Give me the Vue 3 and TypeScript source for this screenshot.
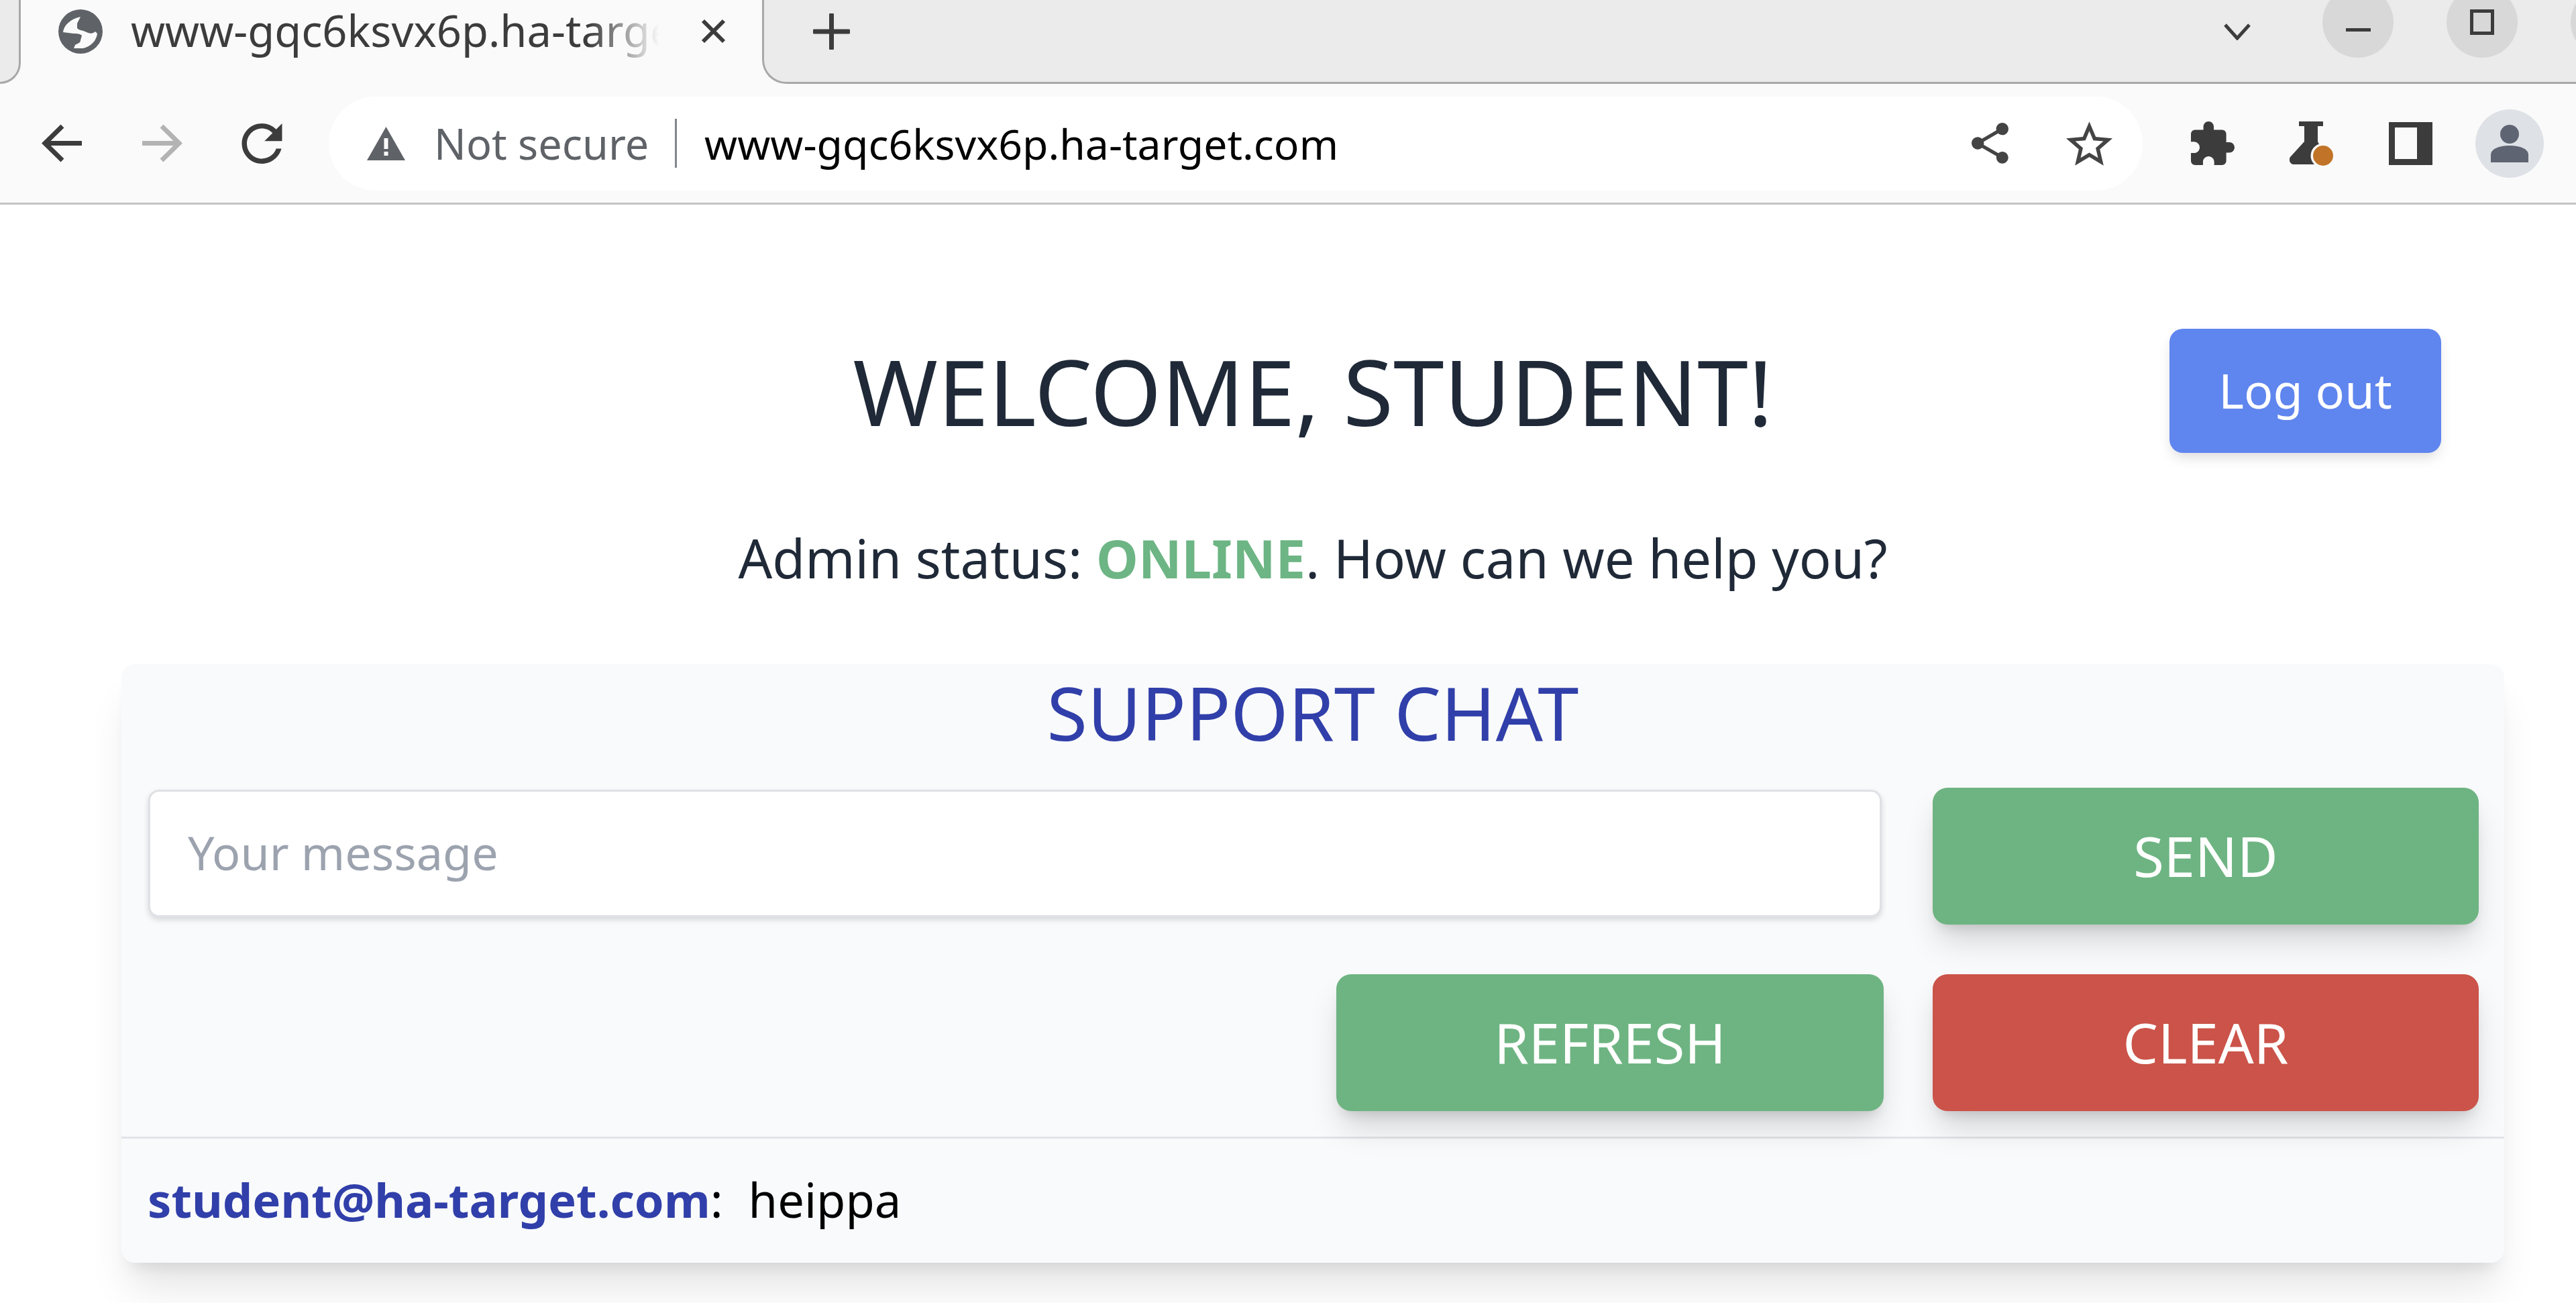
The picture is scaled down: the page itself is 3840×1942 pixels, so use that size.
<script setup lang="ts">
import { ref } from 'vue'

interface ChatMessage {
  sender: string
  text: string
}

const messages = ref<ChatMessage[]>([{ sender: 'student@ha-target.com', text: 'heippa' }])
const draft = ref('')
const url = 'www-gqc6ksvx6p.ha-target.com'
</script>

<template>
  <div class="page">
    <header class="chrome">
      <div class="tabstrip">
        <div class="stub"></div>
        <div class="tab">
          <svg class="favicon" viewBox="0 0 66 66">
            <circle cx="33" cy="33" r="33" fill="#5f6368" />
            <path d="M7 34C8 24 18 14 33 11L28 21V28C32 32 36 31 40 33S50 38 55 33L58 36C57 45 50 55 37 58L23 58 25 53C30 50 33 50 33 46L35 39C32 36 28 36 23 36z" fill="#fafafa" />
          </svg>
          <span class="tab-title">{{ url }}</span>
          <svg class="tab-close" viewBox="0 0 37 37">
            <path d="M3 3l31 31M34 3L3 34" stroke="#3c3c3c" stroke-width="6" fill="none" />
          </svg>
        </div>
        <div class="strip-rest">
          <svg class="new-tab" viewBox="0 0 55 54">
            <path d="M27.5 2v50M2 27h51" stroke="#3c3c3c" stroke-width="7" stroke-linecap="round" fill="none" />
          </svg>
          <svg class="tab-search" viewBox="0 0 40 25">
            <path d="M2 2l18 20L38 2" stroke="#3c3c3c" stroke-width="5" fill="none" />
          </svg>
          <div class="win-btn win-min">
            <svg viewBox="0 0 37 5" width="37" height="5"><rect width="37" height="5" fill="#3c3c3c" /></svg>
          </div>
          <div class="win-btn win-max">
            <svg viewBox="0 0 36 38" width="36" height="38">
              <rect x="2.5" y="2.5" width="31" height="33" fill="none" stroke="#3c3c3c" stroke-width="5" />
            </svg>
          </div>
          <div class="win-btn win-close"></div>
        </div>
      </div>

      <div class="toolbar">
        <svg class="ic back" viewBox="0 0 61 57">
          <path d="M60 28.5H6M31 3L5 28.5 31 54" stroke="#3c3c3c" stroke-width="7" fill="none" />
        </svg>
        <svg class="ic forward" viewBox="0 0 61 57">
          <path d="M1 28.5h54M30 3l26 25.5L30 54" stroke="#b3b3b3" stroke-width="7" fill="none" />
        </svg>
        <svg class="ic reload" viewBox="4 4 16 16">
          <path fill="#3c3c3c" d="M17.65 6.35A7.958 7.958 0 0 0 12 4c-4.42 0-7.99 3.58-7.99 8s3.57 8 7.99 8c3.73 0 6.84-2.55 7.73-6h-2.08A5.99 5.99 0 0 1 12 18c-3.31 0-6-2.69-6-6s2.69-6 6-6c1.66 0 3.14.69 4.22 1.78L13 11h7V4l-2.35 2.35z" />
        </svg>

        <div class="omnibox">
          <svg class="warn" viewBox="0 0 57 50">
            <path d="M28.5 0L57 50H0z" fill="#5f6368" />
            <rect x="25.5" y="17" width="6" height="16" fill="#fff" />
            <rect x="25.5" y="37" width="6" height="6" fill="#fff" />
          </svg>
          <span class="not-secure">Not secure</span>
          <span class="sep"></span>
          <span class="omni-url">{{ url }}</span>
          <svg class="ic share" viewBox="3 2 18 20">
            <path fill="#444" d="M18 16.08c-.76 0-1.44.3-1.96.77L8.91 12.7c.05-.23.09-.46.09-.7s-.04-.47-.09-.7l7.05-4.11c.54.5 1.25.81 2.04.81 1.66 0 3-1.34 3-3s-1.34-3-3-3-3 1.34-3 3c0 .24.04.47.09.7L8.04 9.81C7.5 9.31 6.79 9 6 9c-1.66 0-3 1.34-3 3s1.34 3 3 3c.79 0 1.5-.31 2.04-.81l7.12 4.16c-.05.21-.08.43-.08.65 0 1.61 1.31 2.92 2.92 2.92s2.92-1.31 2.92-2.92-1.31-2.92-2.92-2.92z" />
          </svg>
          <svg class="ic star" viewBox="2 2 20 19">
            <path fill="#444" d="M22 9.24l-7.19-.62L12 2 9.19 8.63 2 9.24l5.46 4.73L5.82 21 12 17.27 18.18 21l-1.63-7.03L22 9.24zM12 15.4l-3.76 2.27 1-4.28-3.32-2.88 4.38-.38L12 6.1l1.71 4.04 4.38.38-3.32 2.88 1 4.28L12 15.4z" />
          </svg>
        </div>

        <svg class="ic puzzle" viewBox="2 1 21 21">
          <path fill="#3c3c3c" d="M20.5 11H19V7c0-1.1-.9-2-2-2h-4V3.5C13 2.12 11.88 1 10.5 1S8 2.12 8 3.5V5H4c-1.1 0-1.99.9-1.99 2v3.8H3.5c1.49 0 2.7 1.21 2.7 2.7s-1.21 2.7-2.7 2.7H2V20c0 1.1.9 2 2 2h3.8v-1.5c0-1.49 1.21-2.7 2.7-2.7 1.49 0 2.7 1.21 2.7 2.7V22H17c1.1 0 2-.9 2-2v-4h1.5c1.38 0 2.5-1.12 2.5-2.5S21.88 11 20.5 11z" />
        </svg>
        <svg class="ic flask" viewBox="0 0 67 66">
          <path fill="#3c3c3c" d="M14 0h36v7h-8v23l10 20c2 8-2 14-8 14H7c-6 0-9-6-6-11L22 30V7h-8z" />
          <circle cx="50" cy="51" r="18.5" fill="#fafafa" />
          <circle cx="50" cy="51" r="15" fill="#c17427" />
        </svg>
        <svg class="ic side" viewBox="0 0 65 64">
          <path fill-rule="evenodd" fill="#3c3c3c" d="M0 0h65v64H0zM9 8v47h33V8z" />
        </svg>
        <div class="avatar">
          <svg viewBox="0 0 56 56" width="56" height="56">
            <circle cx="28" cy="14" r="14" fill="#5f6473" />
            <path d="M0 56V45c0-9 12-14 28-14s28 5 28 14v11z" fill="#5f6473" />
          </svg>
        </div>
      </div>
    </header>

    <main class="content">
      <div class="welcome-row">
        <span></span>
        <h1 class="welcome">WELCOME, STUDENT!</h1>
        <button class="logout" type="button">Log out</button>
      </div>
      <p class="status">
        Admin status: <strong class="online">ONLINE</strong>. How can we help you?
      </p>

      <section class="card">
        <h2 class="card-title">SUPPORT CHAT</h2>
        <div class="form">
          <input v-model="draft" class="msg-input" type="text" placeholder="Your message" />
          <button class="action green send" type="button">SEND</button>
          <button class="action green refresh" type="button">REFRESH</button>
          <button class="action red clear" type="button">CLEAR</button>
        </div>
        <ul class="messages">
          <li v-for="m in messages" :key="m.sender" class="message">
            <span class="sender">{{ m.sender }}</span><span class="colon">:</span>
            <span class="text">{{ m.text }}</span>
          </li>
        </ul>
      </section>
    </main>
  </div>
</template>

<style>
html,
body {
  margin: 0;
  background: #fff;
  overflow: hidden;
}
</style>

<style scoped>
.page {
  width: 3840px;
  height: 1942px;
  overflow: hidden;
  font-family: "Noto Sans", sans-serif;
  color: #1f2937;
}

.chrome {
  display: flex;
  flex-direction: column;
}

.tabstrip {
  display: flex;
  height: 125px;
  background: #fafafa;
  overflow: hidden;
}

.stub {
  width: 31px;
  flex: none;
  box-sizing: border-box;
  background: #ebebeb;
  border-right: 3px solid #a8a8a8;
  border-bottom: 3px solid #a8a8a8;
  border-bottom-right-radius: 36px;
}

.tab {
  width: 1105px;
  flex: none;
  display: flex;
  align-items: flex-start;
}

.favicon {
  width: 66px;
  height: 66px;
  margin: 14px 0 0 56px;
  flex: none;
}

.tab-title {
  width: 812px;
  flex: none;
  margin: 0 0 0 42px;
  font-size: 65px;
  line-height: 90px;
  white-space: nowrap;
  overflow: hidden;
  color: #3c3c3c;
  -webkit-mask-image: linear-gradient(90deg, #000 84%, transparent 97%);
  mask-image: linear-gradient(90deg, #000 84%, transparent 97%);
}

.tab-close {
  width: 37px;
  height: 37px;
  margin: 28px 0 0 38px;
  flex: none;
}

.strip-rest {
  flex: 1;
  min-width: 0;
  overflow: hidden;
  display: flex;
  align-items: flex-start;
  box-sizing: border-box;
  background: #ebebeb;
  border-left: 3px solid #a8a8a8;
  border-bottom: 3px solid #a8a8a8;
  border-bottom-left-radius: 36px;
}

.new-tab {
  width: 55px;
  height: 54px;
  margin: 20px 0 0 73px;
  flex: none;
}

.tab-search {
  width: 40px;
  height: 25px;
  margin: 35px 0 0 2048px;
  flex: none;
}

.win-btn {
  width: 106px;
  height: 106px;
  margin-top: -20px;
  border-radius: 50%;
  background: #d8d8d8;
  flex: none;
  display: flex;
  align-items: center;
  justify-content: center;
}

.win-min {
  margin-left: 107px;
}

.win-min svg {
  margin-top: 22px;
}

.win-max {
  margin-left: 79px;
}

.win-close {
  margin-left: 79px;
}

.toolbar {
  display: flex;
  align-items: center;
  height: 177px;
  background: #fafafa;
  border-bottom: 3px solid #c4c4c4;
}

.ic {
  display: block;
  flex: none;
}

.back {
  width: 61px;
  height: 57px;
  margin-left: 62px;
}

.forward {
  width: 61px;
  height: 57px;
  margin-left: 88px;
}

.reload {
  width: 61px;
  height: 60px;
  margin-left: 88px;
}

.omnibox {
  width: 2704px;
  height: 140px;
  margin-left: 69px;
  flex: none;
  box-sizing: border-box;
  display: flex;
  align-items: center;
  background: #fff;
  border-radius: 70px;
}

.warn {
  width: 57px;
  height: 50px;
  margin-left: 57px;
  flex: none;
}

.not-secure {
  width: 319px;
  margin-left: 43px;
  font-size: 63px;
  white-space: nowrap;
  color: #5f6368;
  flex: none;
}

.sep {
  width: 3px;
  height: 73px;
  margin-left: 40px;
  background: #80868b;
  flex: none;
}

.omni-url {
  width: 948px;
  margin-left: 41px;
  font-size: 62.5px;
  white-space: nowrap;
  color: #000;
  flex: none;
}

.share {
  width: 57px;
  height: 61px;
  margin-left: 940px;
}

.star {
  width: 69px;
  height: 66px;
  margin-left: 85px;
}

.puzzle {
  width: 65px;
  height: 65px;
  margin-left: 72px;
}

.flask {
  width: 67px;
  height: 66px;
  margin-left: 82px;
}

.side {
  width: 65px;
  height: 64px;
  margin-left: 81px;
}

.avatar {
  width: 102px;
  height: 102px;
  margin-left: 64px;
  border-radius: 50%;
  background: #dee1e6;
  display: flex;
  align-items: center;
  justify-content: center;
  flex: none;
}

.content {
  padding: 185px 107px 0 181px;
}

.welcome-row {
  display: grid;
  grid-template-columns: 1fr auto 1fr;
  align-items: center;
  height: 185px;
}

.welcome {
  margin: 0;
  font-size: 136px;
  font-weight: 400;
  line-height: 180px;
  color: #1f2937;
  white-space: nowrap;
}

.logout {
  justify-self: end;
  margin-right: 94px;
  width: 405px;
  height: 185px;
  padding: 0 0 4px;
  border: none;
  border-radius: 20px;
  background: #5f85ee;
  color: #fff;
  font-family: inherit;
  font-size: 72px;
  box-shadow: 0 10px 20px -4px rgba(0, 0, 0, 0.15);
}

.status {
  margin: 106px 0 0;
  font-size: 79.5px;
  line-height: 100px;
  text-align: center;
  color: #1f2937;
}

.online {
  color: #6db584;
  font-weight: 700;
}

.card {
  margin-top: 109px;
  height: 892px;
  background: #f9fafb;
  border-radius: 20px;
  box-shadow: 0 49px 61px -12px rgba(0, 0, 0, 0.1), 0 20px 25px -15px rgba(0, 0, 0, 0.1);
  display: flex;
  flex-direction: column;
}

.card-title {
  margin: 0;
  height: 184px;
  box-sizing: border-box;
  padding-top: 6px;
  font-size: 110px;
  font-weight: 400;
  line-height: 130px;
  text-align: center;
  color: #303fa9;
}

.form {
  display: grid;
  grid-template-columns: 1fr 816px 814px;
  grid-template-rows: 204px 204px;
  gap: 74px 73px;
  padding: 0 38px 38px 40px;
  border-bottom: 3px solid #e1e3e8;
}

.msg-input {
  grid-column: 1 / 3;
  margin: 3px 3px 0 0;
  height: 190px;
  box-sizing: border-box;
  padding: 0 56px 4px;
  border: 3px solid #dfe1e6;
  border-radius: 16px;
  background: #fff;
  font-family: inherit;
  font-size: 70px;
  outline: none;
  box-shadow: 0 4px 8px rgba(0, 0, 0, 0.14);
}

.msg-input::placeholder {
  color: #9ca3af;
  opacity: 1;
}

.action {
  padding: 0 0 4px;
  border: none;
  border-radius: 22px;
  color: #fff;
  font-family: inherit;
  font-size: 83px;
  box-shadow: 0 30px 48px -8px rgba(0, 0, 0, 0.16), 0 12px 18px -8px rgba(0, 0, 0, 0.12);
}

.green {
  background: #6eb482;
}

.red {
  background: #cb5349;
}

.send {
  grid-column: 3;
  grid-row: 1;
}

.refresh {
  grid-column: 2;
  grid-row: 2;
}

.clear {
  grid-column: 3;
  grid-row: 2;
}

.messages {
  list-style: none;
  margin: 0;
  padding: 0;
}

.message {
  display: flex;
  align-items: center;
  box-sizing: border-box;
  height: 185px;
  padding: 0 0 3px 39px;
  font-size: 70.5px;
  color: #000;
}

.sender {
  font-weight: 700;
  color: #303fa9;
}

.text {
  margin-left: 38px;
}
</style>
